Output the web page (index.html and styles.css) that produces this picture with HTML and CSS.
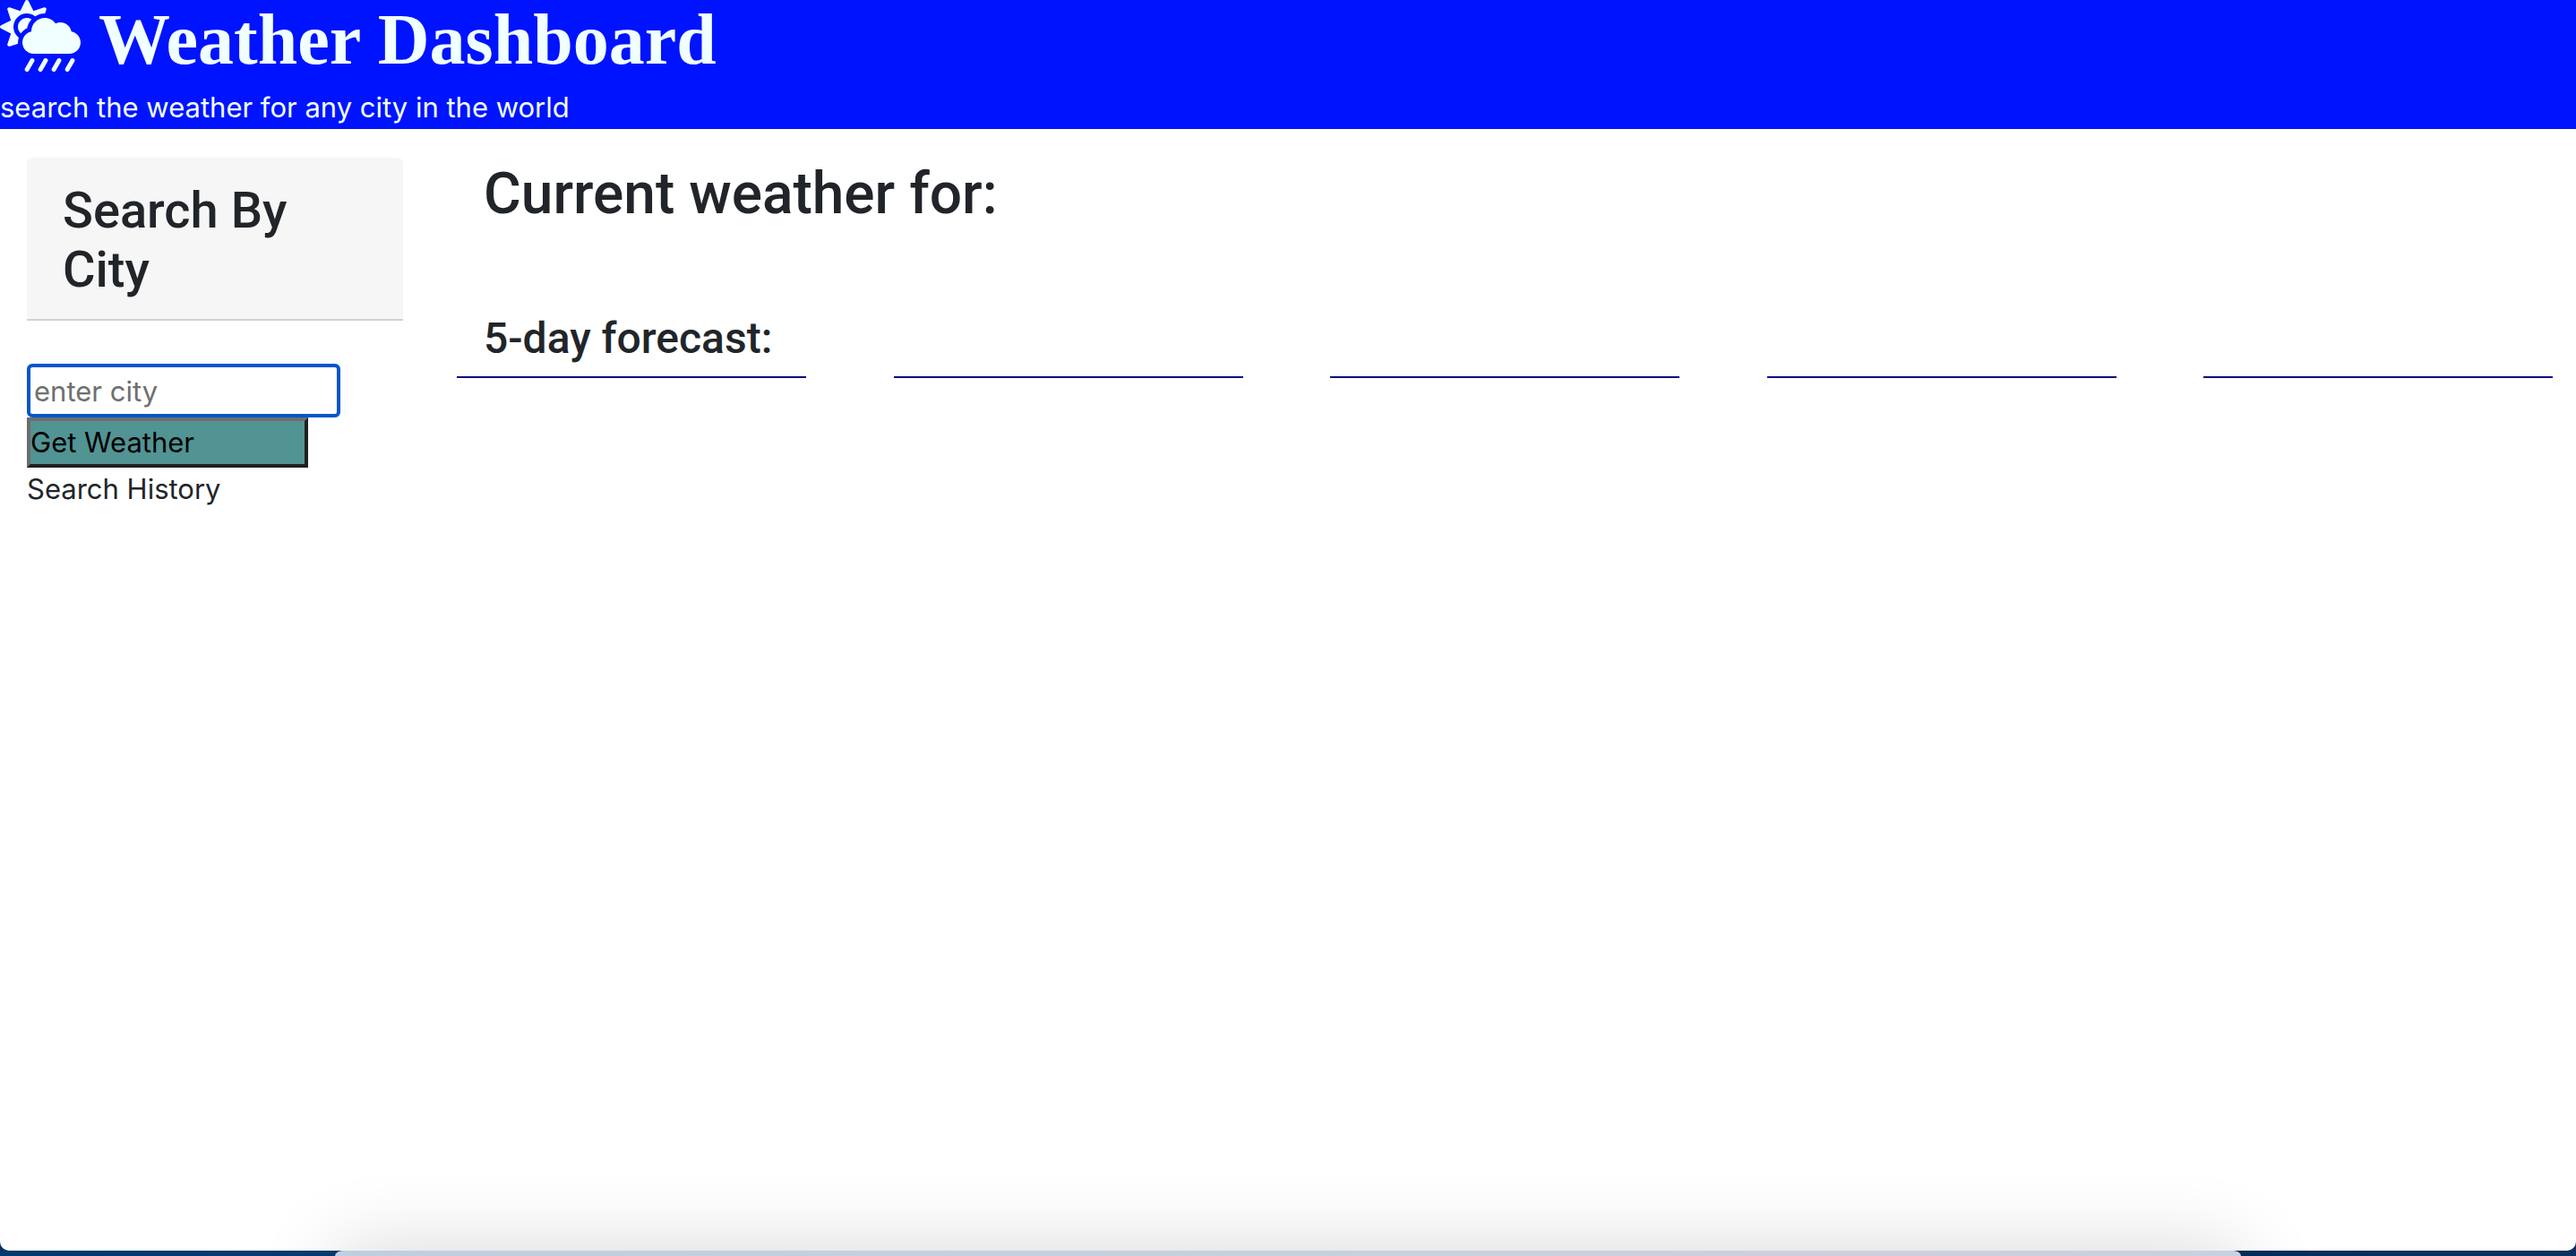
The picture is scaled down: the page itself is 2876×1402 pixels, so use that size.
FILE: index.html
```html
<!DOCTYPE html>
<html lang="en">
<head>
<meta charset="utf-8">
<meta name="viewport" content="width=device-width, initial-scale=1">
<title>Weather Dashboard</title>
<link rel="stylesheet" href="styles.css">
</head>
<body>
<div class="window">
  <header class="banner">
    <h1 class="banner-title">
      <svg class="banner-icon" viewBox="0 0 576 512" aria-hidden="true">
        <path d="M510.500 225.500c-6.900-37.200-39.300-65.500-78.500-65.500-12.300 0-23.900 3-34.300 8-17.400-24.100-45.600-40-77.700-40-53 0-96 43-96 96 0 .5.2 1.100.2 1.600C187.600 233 160 265.200 160 304c0 44.200 35.800 80 80 80h256c44.200 0 80-35.800 80-80 0-39.200-28.200-71.700-65.500-78.500zm-386.400 34.400c-37.400-37.400-37.400-98.300 0-135.800 34.600-34.600 89.100-36.800 126.700-7.400 20-12.900 43.600-20.700 69.200-20.700.7 0 1.300.2 2 .2l8.900-26.700c3.400-10.200-6.300-19.800-16.500-16.400l-75.300 25.100-35.500-71c-4.800-9.600-18.500-9.600-23.300 0l-35.500 71-75.300-25.100c-10.200-3.400-19.800 6.300-16.400 16.500l25.100 75.300-71 35.500c-9.600 4.800-9.600 18.500 0 23.300l71 35.500-25.100 75.300c-3.400 10.200 6.300 19.800 16.500 16.500l59.200-19.700c-.2-2.400-.7-4.700-.7-7.200 0-12.500 2.300-24.500 6.200-35.900-3.600-2.700-7.100-5.200-10.200-8.300zm69.800-58c4.300-24.500 15.800-46.400 31.900-64-9.800-6.200-21.400-9.900-33.800-9.900-35.300 0-64 28.700-64 64 0 18.700 8.200 35.400 21.100 47.100 11.300-15.900 26.600-28.900 44.800-37.200z"/>
        <path class="rain" d="M230 432l-37 64M326 432l-37 64M422 432l-37 64M518 432l-37 64"/>
      </svg>
      Weather Dashboard
    </h1>
    <p class="banner-text">search the weather for any city in the world</p>
  </header>
  <main class="layout">
    <aside class="sidebar">
      <h3 class="card-header"><label for="city">Search By City</label></h3>
      <form class="search">
        <input class="city-input" id="city" type="text" placeholder="enter city">
        <button class="search-button" type="button">Get Weather</button>
      </form>
      <p class="history">Search History</p>
    </aside>
    <section class="weather">
      <h2 class="current">Current weather for:</h2>
      <h4 class="forecast-title">5-day forecast:</h4>
      <div class="forecast">
        <div class="day"></div>
        <div class="day"></div>
        <div class="day"></div>
        <div class="day"></div>
        <div class="day"></div>
      </div>
    </section>
  </main>
</div>
<div class="desktop"><div class="dock"></div></div>
</body>
</html>
```
FILE: styles.css
```css
* {
  box-sizing: border-box;
}

body {
  display: flex;
  flex-direction: column;
  min-height: 100vh;
  margin: 0;
  overflow: hidden;
  background: #05305f;
  color: #212529;
  font-family: Inter, "Liberation Sans", sans-serif;
  font-size: 31px;
  line-height: 48px;
}

h1, h2, h3, h4, p {
  margin: 0;
  font-family: Roboto, "Liberation Sans", sans-serif;
  font-weight: 500;
}

p {
  font-family: inherit;
  font-weight: 400;
}

.window {
  flex: 1;
  background: #fff;
  border-radius: 0 0 10px 10px;
}

.banner {
  background: #0013ff;
  color: #f0ffff;
}

.banner-title {
  display: flex;
  gap: 20px;
  font-family: "Liberation Serif", serif;
  font-size: 80px;
  font-weight: 700;
  line-height: 88px;
  padding-bottom: 8px;
}

.banner-icon {
  width: 90px;
  height: 80px;
  fill: #f0ffff;
}

.rain {
  fill: none;
  stroke: #f0ffff;
  stroke-width: 32px;
  stroke-linecap: round;
}

.layout {
  display: flex;
  padding-top: 32px;
}

.sidebar {
  width: 480px;
  padding: 0 30px;
}

.card-header {
  padding: 26px 40px 22px;
  background: #f6f6f6;
  border-bottom: 2px solid #d2d2d2;
  border-radius: 6px 6px 0 0;
  font-size: 56px;
  line-height: 66px;
}

.search {
  display: flex;
  flex-direction: column;
  align-items: flex-start;
  padding-top: 48px;
}

.city-input {
  width: 350px;
  height: 60px;
  padding: 0 4px;
  border: 4px solid #0057c8;
  border-radius: 6px;
  outline: none;
  background: #fff;
  font: inherit;
}

.city-input::placeholder {
  color: #6f6f6f;
  opacity: 1;
}

.search-button {
  width: 314px;
  height: 56px;
  padding: 0;
  border: 4px solid;
  border-color: #6d6d6d #202020 #202020 #6d6d6d;
  background: #529394;
  color: #000;
  font: inherit;
  text-align: left;
}

.weather {
  flex: 1;
  padding: 0 26px 0 30px;
}

.current {
  padding: 0 30px;
  font-size: 64px;
  line-height: 82px;
}

.forecast-title {
  padding: 92px 30px 14px;
  font-size: 48px;
  line-height: 56px;
}

.forecast {
  display: flex;
  justify-content: space-between;
}

.day {
  width: calc(100% / 6);
  border-top: 2px solid #000080;
}

.desktop {
  height: 6px;
  background: linear-gradient(90deg, #00396f, #123d78 30%, #00285c 70%, #0b315f);
  isolation: isolate;
}

.dock {
  position: relative;
  width: 74%;
  height: 6px;
  margin: 0 auto;
  border-radius: 9px 9px 0 0 / 6px 6px 0 0;
  background: linear-gradient(90deg, #becfe1, #c5d1df 50%, #cfcfdc 80%, #c6d1e1);
}

.dock::before {
  content: "";
  position: absolute;
  inset: 0 60px;
  z-index: -1;
  box-shadow: 0 60px 90px 60px rgba(0, 0, 0, 0.16);
}
```
